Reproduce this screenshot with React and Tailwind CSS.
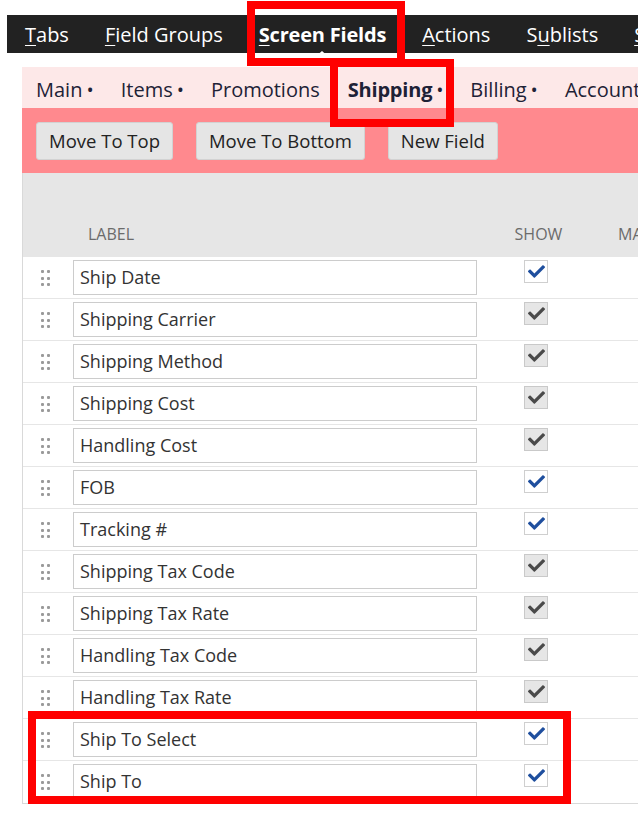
import { FaCheck } from 'react-icons/fa';

const topTabs = [
  { key: 'T', rest: 'abs' },
  { key: 'F', rest: 'ield Groups' },
  { key: 'S', rest: 'creen Fields', active: true },
  { key: 'A', rest: 'ctions' },
  { pre: 'S', key: 'u', rest: 'blists' },
  { key: 'S', rest: 'ubtabs' },
];

const subTabs = [
  { label: 'Main', dot: true },
  { label: 'Items', dot: true },
  { label: 'Promotions' },
  { label: 'Shipping', dot: true, active: true },
  { label: 'Billing', dot: true },
  { label: 'Accounting', dot: true },
];

const fields = [
  { label: 'Ship Date', on: true },
  { label: 'Shipping Carrier' },
  { label: 'Shipping Method' },
  { label: 'Shipping Cost' },
  { label: 'Handling Cost' },
  { label: 'FOB', on: true },
  { label: 'Tracking #', on: true },
  { label: 'Shipping Tax Code' },
  { label: 'Shipping Tax Rate' },
  { label: 'Handling Tax Code' },
  { label: 'Handling Tax Rate' },
  { label: 'Ship To Select', on: true },
  { label: 'Ship To', on: true },
];

function Handle() {
  return (
    <div className="grid grid-cols-2 gap-x-[3px] gap-y-[3.5px] mt-[10px] ml-[18px] w-[9px]">
      {[0, 1, 2, 3, 4, 5].map((i) => (
        <span key={i} className="w-[3px] h-[3px] bg-[#9a9a9a] rounded-[1px]"></span>
      ))}
    </div>
  );
}

function Check({ on }) {
  return on ? (
    <div className="w-[24px] h-[23px] border border-[#cfcfcf] bg-white flex items-center justify-center">
      <FaCheck className="text-[#1f4f9e] w-[17px] h-[17px]" />
    </div>
  ) : (
    <div className="w-[24px] h-[23px] border border-[#c9c9c9] bg-[#e6e6e6] flex items-center justify-center">
      <FaCheck className="text-[#4a4a4a] w-[17px] h-[17px]" />
    </div>
  );
}

export default function App() {
  return (
    <div className="relative w-[638px] h-[833px] bg-white overflow-hidden font-['Open_Sans',sans-serif]">
      <div className="pt-[15px]">
        <nav className="ml-[7px] h-[38px] bg-[#222222] flex items-center pl-[18px] gap-[36px] whitespace-nowrap overflow-hidden">
          {topTabs.map((t, i) => (
            <div key={i} className={`relative pt-[2px] text-[20px] text-white ${t.active ? 'font-bold tracking-[-0.2px]' : ''}`}>
              {t.pre}
              <span className="underline underline-offset-[3px] decoration-1">{t.key}</span>
              {t.rest}
              {t.active && (
                <span className="absolute left-1/2 -translate-x-1/2 bottom-[-8px] w-0 h-0 border-x-[8px] border-x-transparent border-b-[7px] border-b-white"></span>
              )}
            </div>
          ))}
        </nav>

        <div className="mt-[14px] ml-[22px] h-[41px] bg-[#fde8e8] flex items-center pl-[14px] pt-[4px] gap-[28px] whitespace-nowrap overflow-hidden">
          {subTabs.map((t) => (
            <div key={t.label} className={`relative text-[20px] text-[#1e2236] ${t.active ? 'font-bold tracking-[-0.2px]' : ''}`}>
              {t.label}
              {t.dot && <span className="ml-[5px] font-bold text-[14px] align-[2px]">•</span>}
              {t.active && (
                <span className="absolute left-[38px] bottom-[-8px] w-0 h-0 border-x-[8px] border-x-transparent border-b-[5px] border-b-[#ffe9e9]"></span>
              )}
            </div>
          ))}
        </div>

        <div className="ml-[22px] h-[65px] bg-[#ff898e] flex items-center pl-[14px] gap-[23px]">
          <button className="h-[38px] px-[12px] rounded-[3px] bg-[#e5e5e5] border border-[#d2d2d2] text-[18.5px] text-[#222]">Move To Top</button>
          <button className="h-[38px] px-[12px] rounded-[3px] bg-[#e5e5e5] border border-[#d2d2d2] text-[18.5px] text-[#222]">Move To Bottom</button>
          <button className="h-[38px] px-[12px] rounded-[3px] bg-[#e5e5e5] border border-[#d2d2d2] text-[18.5px] text-[#222]">New Field</button>
        </div>

        <div className="ml-[22px] border-l border-b border-[#d9d9d9]">
          <div className="h-[84px] bg-[#e6e6e6] flex items-end pb-[11px] text-[16px] text-[#6b6b6b] whitespace-nowrap overflow-hidden">
            <div className="w-[50px] shrink-0"></div>
            <div className="w-[404px] shrink-0 pl-[15px]">LABEL</div>
            <div className="ml-[23px] w-[72px] shrink-0 flex justify-center pl-[5px]">SHOW</div>
            <div className="pl-[46px]">MANDATORY</div>
          </div>
          {fields.map((f, i) => (
            <div key={f.label} className={`h-[42px] flex items-start pt-[3px] ${i < fields.length - 1 ? 'border-b border-[#e6e6e6]' : ''}`}>
              <div className="w-[50px] h-full">
                <Handle />
              </div>
              <div className="w-[404px] h-[35px] border border-[#cccccc] px-[6px] flex items-center text-[18px] text-[#333]">
                {f.label}
              </div>
              <div className="ml-[23px] w-[72px] flex justify-center">
                <Check on={f.on} />
              </div>
            </div>
          ))}
        </div>
      </div>

      <div className="absolute left-[247px] top-[1px] w-[158px] h-[65px] border-[8px] border-[#ff0000]"></div>
      <div className="absolute left-[330px] top-[59px] w-[124px] h-[68px] border-[8px] border-[#ff0000]"></div>
      <div className="absolute left-[28px] top-[711px] w-[543px] h-[93px] border-[8px] border-[#ff0000]"></div>
    </div>
  );
}
